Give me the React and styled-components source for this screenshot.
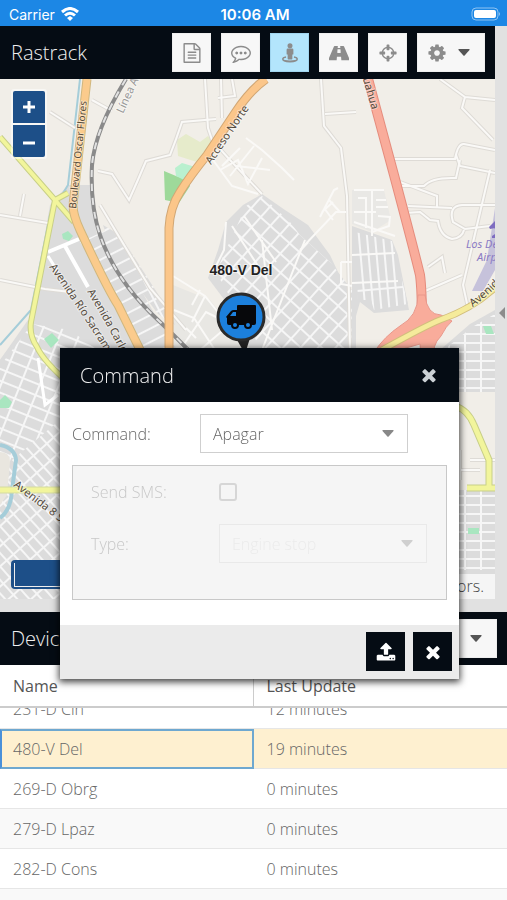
import React, { useLayoutEffect, useRef, useState } from 'react';
import styled, { createGlobalStyle } from 'styled-components';

const GlobalStyle = createGlobalStyle`
    * {
        box-sizing: border-box;
    }

    body {
        margin: 0;
        background: #e1e1e1;
        color: #666;
        font-family: 'Open Sans', 'Noto Sans', sans-serif;
        font-size: 16px;
        font-weight: 300;
    }

    button,
    select,
    input {
        margin: 0;
        font: inherit;
    }
`;

//Layout:

const Screen = styled.div`
    position: relative;
    display: grid;
    grid-template-columns: minmax(0, 1fr);
    grid-template-rows: 26px minmax(0, 2fr) minmax(0, 1fr);
    grid-template-rows: 26px minmax(0, 1fr) 32vh;
    height: 100vh;
    overflow: hidden;
`;

const StatusBar = styled.header`
    display: grid;
    grid-template-columns: 1fr auto 1fr;
    align-items: center;
    padding: 2px 6px 0 9px;
    background: #1c87e5;
    color: #fff;
    font-family: Inter, 'Liberation Sans', sans-serif;
    font-size: 14px;
    font-weight: 400;
`;

const Carrier = styled.span`
    display: flex;
    align-items: center;
    gap: 6px;
`;

const Time = styled.span`
    font-size: 15px;
    font-weight: 600;
`;

const BatteryIcon = styled.svg`
    justify-self: end;
`;

const Upper = styled.div`
    display: flex;
    min-height: 0;
    padding-bottom: 13px;
`;

const MapPanel = styled.section`
    display: flex;
    flex-direction: column;
    flex: 1;
    min-width: 0;
`;

const SideSplitter = styled.button`
    display: flex;
    align-items: center;
    justify-content: flex-end;
    flex: none;
    width: 12px;
    padding: 0 2px 0 0;
    border: 0;
    background: #e1e1e1;
`;

const Header = styled.div`
    display: flex;
    align-items: center;
    gap: 10px;
    flex: none;
    height: 53px;
    padding: 0 10px 0 11px;
    background: #050c14;
`;

const Title = styled.h1`
    flex: 1;
    margin: 0;
    color: #f0f0f0;
    font-size: 20px;
    font-weight: 300;
`;

const ToolButton = styled.button`
    display: flex;
    align-items: center;
    justify-content: center;
    gap: 11px;
    flex: none;
    width: ${(props) => (props.$wide ? 68 : 39)}px;
    height: 39px;
    padding: 0 ${(props) => (props.$wide ? 5 : 0)}px 0 0;
    border: 1px solid ${(props) => (props.$pressed ? '#a0d4ee' : '#eee')};
    background: ${(props) => (props.$pressed ? '#b3e5fc' : '#f7f7f7')};
    color: #8c8c8c;
`;

//Map:

const MapArea = styled.div`
    position: relative;
    flex: 1;
    min-height: 0;
    overflow: hidden;
`;

const MapDrawing = styled.svg`
    display: block;
    width: 100%;
    height: 100%;
`;

const ZoomControl = styled.div`
    position: absolute;
    top: 10px;
    left: 11px;
    display: grid;
    gap: 2px;
    padding: 2px;
    border-radius: 3px;
    background: rgba(255, 255, 255, 0.5);
`;

const ZoomButton = styled.button`
    display: grid;
    place-items: center;
    width: 32px;
    height: 32px;
    padding: 0;
    border: 0;
    border-radius: ${(props) => (props.$bottom ? '0 0 2px 2px' : '2px 2px 0 0')};
    background: #1d4f88;
    color: #fff;
`;

const ScaleLine = styled.div`
    position: absolute;
    left: 11px;
    bottom: 10px;
    width: 120px;
    height: 29px;
    padding: 3px;
    border-radius: 4px;
    background: #1d4f88;

    &::before {
        content: '';
        display: block;
        height: 100%;
        border: 1px solid #eee;
        border-top: 0;
    }
`;

const Attribution = styled.div`
    position: absolute;
    right: 0;
    bottom: 0;
    padding: 0 11px 0 6px;
    background: rgba(255, 255, 255, 0.7);
    line-height: 25px;
    color: #444;
`;

//Devices:

const DevicesPanel = styled.section`
    display: flex;
    flex-direction: column;
    min-height: 0;
`;

const GridScroll = styled.div`
    flex: 1;
    min-height: 0;
    overflow: hidden;
    background: #fff;
`;

const DeviceTable = styled.table`
    width: 100%;
    table-layout: fixed;
    border-collapse: separate;
    border-spacing: 0;
`;

const HeadCell = styled.th`
    position: sticky;
    top: 0;
    height: 43px;
    padding: 0 12px 0 13px;
    border-bottom: 2px solid #ccc;
    background: #fff;
    color: #555;
    font-weight: 400;
    text-align: left;

    &:first-child {
        border-right: 1px solid #ccc;
    }
`;

const Cell = styled.td`
    height: 40px;
    padding: 0 12px 0 13px;
    background: ${(props) => props.$fill};
    border-bottom: 1px solid #e6e6e6;
    ${(props) =>
        props.$focused &&
        'border: 2px solid #6ea8d0; border-left-color: #4a90d9; padding-left: 11px;'}
`;

//Dialog:

const Dialog = styled.div`
    position: absolute;
    top: 348px;
    left: 60px;
    right: 48px;
    background: #fff;
    box-shadow: 0 2px 7px 1px rgba(0, 0, 0, 0.75);
`;

const DialogHeader = styled.div`
    display: flex;
    align-items: center;
    justify-content: space-between;
    height: 54px;
    padding: 0 20px;
    background: #050c14;
`;

const DialogTitle = styled.h2`
    margin: 0;
    color: #f0f0f0;
    font-size: 20px;
    font-weight: 300;
`;

const CloseButton = styled.button`
    display: flex;
    padding: 0;
    border: 0;
    background: none;
    color: #ccd1d5;
`;

const DialogBody = styled.div`
    padding: 12px 12px 25px;
`;

const Field = styled.div`
    display: grid;
    grid-template-columns: 128px 208px;
    align-items: center;
    min-height: 39px;
`;

const Label = styled.label`
    color: ${(props) => (props.$disabled ? '#c8c8c8' : '#666')};
`;

const SelectBox = styled.div`
    position: relative;
    color: #888;
`;

const SelectInput = styled.select`
    appearance: none;
    display: block;
    width: 100%;
    height: 39px;
    padding: 0 36px 0 12px;
    border: 1px solid #cfcfcf;
    border-radius: 0;
    background: #fff;
    color: #666;

    &:disabled {
        border-color: #e9e9e9;
        background: #f6f6f6;
        color: #ebebeb;
        opacity: 1;
    }
`;

const SelectCaret = styled.span`
    position: absolute;
    top: 0;
    bottom: 0;
    right: 14px;
    display: flex;
    align-items: center;
    color: ${(props) => (props.$disabled ? '#cfcfcf' : '#888')};
    pointer-events: none;
`;

const Options = styled.fieldset`
    display: grid;
    gap: 13px;
    min-width: 0;
    margin: 12px 0 0;
    padding: 6px 18px 36px;
    border: 1px solid #c8c8c8;
    background: #f5f5f5;
`;

const Checkbox = styled.input`
    appearance: none;
    width: 18px;
    height: 18px;
    border: 2px solid #d6d6d6;
    border-radius: 3px;
`;

const DialogFooter = styled.div`
    display: flex;
    justify-content: flex-end;
    gap: 8px;
    padding: 7px 7px 8px;
    background: #ebebeb;
`;

const DarkButton = styled.button`
    display: grid;
    place-items: center;
    width: 39px;
    height: 39px;
    padding: 0;
    border: 0;
    background: #050c14;
    color: #fff;
`;

//Icons:

const icons = {
    report:
        'M1596 380q28 28 48 76t20 88v1152q0 40-28 68t-68 28h-1344q-40 0-68-28t-28-68v-1600q0-40 28-68t68-28h896q40 0 88 20t76 48zm-444-244v376h376q-10-29-22-41l-313-313q-12-12-41-22zm384 1528v-1024h-416q-40 0-68-28t-28-68v-416h-768v1536h1280zm-1024-864q0-14 9-23t23-9h704q14 0 23 9t9 23v64q0 14-9 23t-23 9h-704q-14 0-23-9t-9-23v-64zm736 224q14 0 23 9t9 23v64q0 14-9 23t-23 9h-704q-14 0-23-9t-9-23v-64q0-14 9-23t23-9h704zm0 256q14 0 23 9t9 23v64q0 14-9 23t-23 9h-704q-14 0-23-9t-9-23v-64q0-14 9-23t23-9h704z',
    comment:
        'M640 896q0 53-37.5 90.5t-90.5 37.5-90.5-37.5-37.5-90.5 37.5-90.5 90.5-37.5 90.5 37.5 37.5 90.5zm384 0q0 53-37.5 90.5t-90.5 37.5-90.5-37.5-37.5-90.5 37.5-90.5 90.5-37.5 90.5 37.5 37.5 90.5zm384 0q0 53-37.5 90.5t-90.5 37.5-90.5-37.5-37.5-90.5 37.5-90.5 90.5-37.5 90.5 37.5 37.5 90.5zm-512-512q-204 0-381.5 69.5t-282 187.5-104.5 255q0 112 71.5 213.5t201.5 175.5l87 50-27 96q-24 91-70 172 152-63 275-171l43-38 57 6q69 8 130 8 204 0 381.5-69.5t282-187.5 104.5-255-104.5-255-282-187.5-381.5-69.5zm896 512q0 174-120 321.5t-326 233-450 85.500q-70 0-145-8-198 175-460 242-49 14-114 22h-5q-15 0-27-10.5t-16-27.5v-1q-3-4-.5-12t2-10 4.5-9.5l6-9 7-8.5 8-9q7-8 31-34.5t34.5-38 31-39.5 32.5-51 27-59 26-76q-157-89-247.5-220t-90.5-281q0-174 120-321.5t326-233 450-85.5 450 85.5 326 233 120 321.5z',
    person:
        'M896 20a225 225 0 1 1 0 450a225 225 0 1 1 0-450zM700 500h392q108 0 108 108v370q0 60-60 60h-34v370q0 62-62 62h-296q-62 0-62-62v-370h-34q-60 0-60-60v-370q0-108 108-108zM530 1190l18 130q-230 45-230 120q0 130 578 130t578-130q0-75-230-120l18-130q350 75 350 250q0 300-716 300t-716-300q0-175 350-250z',
    road:
        'M500 260h290l-14 190h240l-14-190h290q40 0 58 44l480 1130q50 122-34 122h-690l-24-330h-372l-24 330h-690q-84 0-34-122l480-1130q18-44 58-44zM764 560l-22 300q0 30 30 30h248q30 0 30-30l-22-300z',
    crosshairs:
        'M1325 1024h-109q-26 0-45-19t-19-45v-128q0-26 19-45t45-19h109q-32-108-112.5-188.5t-188.5-112.5v109q0 26-19 45t-45 19h-128q-26 0-45-19t-19-45v-109q-108 32-188.5 112.5t-112.5 188.5h109q26 0 45 19t19 45v128q0 26-19 45t-45 19h-109q32 108 112.5 188.5t188.5 112.5v-109q0-26 19-45t45-19h128q26 0 45 19t19 45v109q108-32 188.5-112.5t112.5-188.5zm339-192v128q0 26-19 45t-45 19h-143q-37 161-154.5 278.5t-278.5 154.5v143q0 26-19 45t-45 19h-128q-26 0-45-19t-19-45v-143q-161-37-278.5-154.5t-154.5-278.5h-143q-26 0-45-19t-19-45v-128q0-26 19-45t45-19h143q37-161 154.5-278.5t278.5-154.5v-143q0-26 19-45t45-19h128q26 0 45 19t19 45v143q161 37 278.5 154.5t154.5 278.5h143q26 0 45 19t19 45z',
    cog:
        'M1152 896q0-106-75-181t-181-75-181 75-75 181 75 181 181 75 181-75 75-181zm512-109v222q0 12-8 23t-20 13l-185 28q-19 54-39 91 35 50 107 138 10 12 10 25t-9 23q-27 37-99 108t-94 71q-12 0-26-9l-138-108q-44 23-91 38-16 136-29 186-7 28-36 28h-222q-14 0-24.5-8.5t-11.5-21.5l-28-184q-49-16-90-37l-141 107q-10 9-25 9-14 0-25-11-126-114-165-168-7-10-7-23 0-12 8-23 15-21 51-66.5t54-70.5q-27-50-41-99l-183-27q-13-2-21-12.5t-8-23.5v-222q0-12 8-23t19-13l186-28q14-46 39-92-40-57-107-138-10-12-10-24 0-10 9-23 26-36 98.5-107.5t94.5-71.5q13 0 26 10l138 107q44-23 91-38 16-136 29-186 7-28 36-28h222q14 0 24.5 8.5t11.5 21.5l28 184q49 16 90 37l142-107q9-9 24-9 13 0 25 10 129 119 165 170 7 8 7 22 0 12-8 23-15 21-51 66.5t-54 70.5q26 50 41 98l183 28q13 2 21 12.5t8 23.5z',
    times:
        'M1490 1322q0 40-28 68l-136 136q-28 28-68 28t-68-28l-294-294-294 294q-28 28-68 28t-68-28l-136-136q-28-28-28-68t28-68l294-294-294-294q-28-28-28-68t28-68l136-136q28-28 68-28t68 28l294 294 294-294q28-28 68-28t68 28l136 136q28 28 28 68t-28 68l-294 294 294 294q28 28 28 68z',
    upload:
        'M1344 1472q0-26-19-45t-45-19-45 19-19 45 19 45 45 19 45-19 19-45zm256 0q0-26-19-45t-45-19-45 19-19 45 19 45 45 19 45-19 19-45zm128-224v320q0 40-28 68t-68 28h-1472q-40 0-68-28t-28-68v-320q0-40 28-68t68-28h427q21 56 70.5 92t110.5 36h256q61 0 110.5-36t70.5-92h427q40 0 68 28t28 68zm-325-648q-17 40-59 40h-256v448q0 26-19 45t-45 19h-256q-26 0-45-19t-19-45v-448h-256q-42 0-59-40-17-39 14-69l448-448q18-19 45-19t45 19l448 448q31 30 14 69z',
};

const Icon = ({ name, size = 20 }) => (
    <svg width={size} height={size} viewBox="0 0 1792 1792" fill="currentColor" aria-hidden="true">
        <path fillRule="evenodd" d={icons[name]} />
    </svg>
);

const Caret = ({ color = 'currentColor' }) => (
    <svg width="12" height="7" viewBox="0 0 12 7" aria-hidden="true">
        <path d="M1 0h10q1 0 .5 1L6.600 6.500q-.6.500-1.200 0L.5 1Q0 0 1 0z" fill={color} />
    </svg>
);

//Street map, everything is drawn in screen units:

const roads = {
    acceso: 'M266 79Q250 90 235 113L207 155Q190 176 180 192Q170 207 169 228V375',
    boulevard: 'M87 79L73 205Q73 215 80 230Q108 290 118 305L150 370',
    rail: 'M126 79Q95 130 92 165Q90 205 100 235Q115 280 158 320Q175 336 200 362',
    west: 'M0 137L55 200L74 222M68 193L55 200L31 322Q29 335 37 347Q44 362 70 384',
    highway: 'M367 75L394 175Q414 250 420 275Q422 290 422 325L430 375',
    avenida: 'M382 350Q425 326 440 320Q475 308 500 283',
};

const lanes = [
    'M205 79L208 128L212 140L230 160L262 194M221 79L222 118M232 79L235 96L218 98',
    'M216 119L182 122Q176 140 170 155L146 161Q138 180 129 200L112 174L98 171',
    'M321 79L324 126L341 148L347 196L350 350M325 114L356 112',
    'M440 79L465 97L495 100M465 97L462 108L493 140',
    'M393 159H455Q458 143 464 144L495 150M456 155L460 166L495 173',
    'M402 186L424 186Q432 177 456 178L460 160',
    'M400 182L437 196V207M408 206L452 208M495 205H462Q448 206 453 222L465 229L490 226',
    'M405 213L420 212L430 220L438 221Q440 236 452 239Q462 238 464 230',
    'M425 291L462 275M428 267L442 257L445 273',
    'M490 170L463 285L468 308',
    'M0 215L48 223M20 216L24 194M0 280L45 289L70 292M50 112L75 128',
    'M92 100L112 111M100 205L115 230L150 288L186 330',
    'M456 470H480M460 450V480M470 460H495',
];

const townStreets = [
    'M246 138L262 150L282 168L294 180M213 160L232 186L258 194M222 166L240 148M230 176L254 146M220 170L238 160L248 184L262 158M236 166L270 170',
    'M346 212L336 212L300 250M320 217L334 190L338 188M324 208L333 220M329 200L340 212M322 212L333 202',
    'M262 350L305 240M226 222L224 250L214 270M232 226L262 272M244 216L276 262M262 240L272 330',
    'M173 276L205 296L232 330M192 305L200 290M174 310L194 318L215 350M180 350L206 312L218 318M186 328L196 338M200 350L228 326M205 296L192 322',
    'M354 190H384M372 190V236M354 212H376M358 198H366V228M376 200H386M376 207H388M378 216L390 217L389 226L372 232M354 222L395 236',
    'M341 262H352M341 262V284L352 286M352 255L395 253M352 283L398 281',
];

const Road = ({ d, width, fill, edge }) => (
    <g fill="none">
        <path d={d} stroke={edge} strokeWidth={width + 2} />
        <path d={d} stroke={fill} strokeWidth={width} />
    </g>
);

const Streets = ({ id, w, h, angle, line = 2 }) => (
    <pattern id={id} width={w} height={h} patternUnits="userSpaceOnUse" patternTransform={`rotate(${angle})`}>
        <rect width={w} height={h} fill="#dcdcdc" />
        <path d={`M0 ${line / 2}H${w}M${line / 2} 0V${h}`} stroke="#f6f6f6" strokeWidth={line} />
    </pattern>
);

const StreetMap = () => (
    <MapDrawing viewBox="0 79 495 520" preserveAspectRatio="xMidYMid slice" role="img" aria-label="Map">
        <defs>
            <Streets id="blocksA" w={15} h={9} angle={48} />
            <Streets id="blocksB" w={13} h={14} angle={42} />
            <Streets id="blocksC" w={8} h={80} angle={-5} />
            <Streets id="blocksD" w={16} h={9} angle={0} />
            <Streets id="blocksE" w={18} h={11} angle={22} />
            <Streets id="blocksF" w={40} h={12} angle={-27} />
        </defs>
        <rect y="79" width="495" height="520" fill="#f1eee8" />

        <g fill="#dcdcdc">
            <path d="M50 205L68 185H90L97 235L160 322L200 370H60L0 360L30 320z" />
            <path d="M0 360L28 320L80 335V600H0z" />
            <path d="M226 222L243 205L262 194L285 210L308 225L330 255L345 287L356 292V350H250L232 310L208 278L218 250z" />
            <path d="M352 226L392 240L398 255L409 310L374 313L360 302L352 330z" />
            <path d="M440 350L470 324L495 310V392L455 385z" />
            <path d="M455 490H495V600H455z" />
        </g>
        <path d="M173 285L210 300L250 350H173z" fill="#e8e7e3" />
        <path d="M80 242L107 230L158 320L190 370H150L118 300L96 265z" fill="url(#blocksF)" />
        <path d="M103 225L120 235L165 305L175 325L158 314L112 252z" fill="url(#blocksF)" />
        <path d="M0 366L32 324L70 330L125 370V600H0z" fill="url(#blocksE)" />
        <path d="M0 470L60 420V600H0z" fill="url(#blocksA)" />
        <path d="M246 206L262 196L290 222L300 235L330 262L352 290V350H262L226 290L216 272z" fill="url(#blocksB)" />
        <path d="M355 232L392 241L408 304L374 310L371 300H358z" fill="url(#blocksC)" />
        <path d="M352 190H384L391 220L372 232L352 224z" fill="#e9e8e5" />
        <path d="M446 348L474 326L495 314V392H455z" fill="url(#blocksD)" />
        <path d="M455 490H495V570H455z" fill="url(#blocksD)" />

        {/* water and parks */}
        <g fill="none" stroke="#a5cdd9" strokeWidth="2">
            <path d="M80 79L68 185L50 215L31 310L0 345" />
            <path d="M0 445Q15 448 16 460L12 490Q11 510 0 518" strokeWidth="4" />
        </g>
        <path d="M0 452Q10 452 10 462L7 495L0 505z" fill="#e9e6df" />
        <path d="M177 140L186 134L200 142L208 136L212 140L200 163L178 156z" fill="#e6ebcb" />
        <path d="M164 171L176 176L188 180L190 186L179 203L165 200z" fill="#9ed99a" />
        <path d="M175 168L182 163L192 166L196 170L188 182L176 176z" fill="#b9f0cf" />
        <g fill="#a9e6c0">
            <path d="M62 234l6-3 5 5-4 5-6-2zM44 339l8-6 7 7-8 8z" />
            <path d="M0 400l5-5 7 7-3 6H0zM468 528h11v6h-11z" />
        </g>
        <path d="M495 208L490 240L487 260L472 291L483 291L495 270z" fill="#c6c2db" />
        <path d="M483 326h8l3 8h-8z" fill="#a9e6c0" />

        {/* minor roads */}
        <g fill="none" stroke="#dedbd6" strokeWidth="4">
            {lanes.map((d) => (
                <path key={d} d={d} />
            ))}
        </g>
        <g fill="none" stroke="#faf9f7" strokeWidth="2">
            {lanes.map((d) => (
                <path key={d} d={d} />
            ))}
            {townStreets.map((d) => (
                <path key={d} d={d} />
            ))}
            <path d="M48 252L79 239M65 246L88 287" stroke="#fff" strokeWidth="4" />
            <path d="M48 256L58 272M38 358L45 405L58 395" stroke="#fff" strokeWidth="3" />
        </g>

        <Road d={roads.west} width={4} fill="#f2f59c" edge="#c8cf88" />
        <Road d="M0 490H70" width={5} fill="#f2f59c" edge="#d5dba0" />
        <Road d="M455 406Q468 410 474 425L489 460V488M467 488H495" width={5} fill="#f2f59c" edge="#c8cf88" />
        <path d={roads.rail} fill="none" stroke="#8a8a8a" strokeWidth="4" />
        <path d={roads.rail} fill="none" stroke="#e2e2e2" strokeWidth="2" strokeDasharray="7 7" />
        <Road d={roads.boulevard} width={7} fill="#fbcb8c" edge="#d0b77e" />
        <Road d={roads.acceso} width={7} fill="#fbc68a" edge="#d1a775" />
        <Road d={roads.highway} width={8} fill="#f9ac9b" edge="#e58c7d" />
        <path d="M418 295Q418 316 400 326Q385 336 374 352H392L420 344Q421 350 420 358H435Q431 346 441 336Q446 326 452 321L441 315Q427 315 425 295z" fill="#f9ac9b" stroke="#e9988b" />
        <Road d={roads.avenida} width={5} fill="#f5eb9b" edge="#d2be7d" />

        {/* street names */}
        <defs>
            <path id="nBoulevard" d="M76 209L88 90" />
            <path id="nAcceso" d="M211 165L263 88" />
            <path id="nLinea" d="M123 114L147 62" />
            <path id="nRio" d="M49 267Q80 310 117 370" />
            <path id="nCarlos" d="M87 292Q105 320 130 370" />
            <path id="nSur" d="M13 486L76 534" />
            <path id="nChih" d="M356 56L378 130" />
            <path id="nEast" d="M473 307Q490 295 515 268" />
        </defs>
        <g
            fill="#554b3d"
            fontFamily="'Noto Sans', 'Open Sans', sans-serif"
            fontSize="11"
            fontWeight="400"
            stroke="#fff"
            strokeOpacity="0.4"
            strokeWidth="2"
            paintOrder="stroke"
        >
            <text fontSize="10"><textPath href="#nBoulevard">Boulevard Oscar Flores</textPath></text>
            <text><textPath href="#nAcceso">Acceso Norte</textPath></text>
            <text fill="#999"><textPath href="#nLinea">Línea A</textPath></text>
            <text><textPath href="#nRio">Avenida Río Sacramento</textPath></text>
            <text><textPath href="#nCarlos">Avenida Carlos</textPath></text>
            <text><textPath href="#nSur">Avenida 8 Sur</textPath></text>
            <text><textPath href="#nChih">Chihuahua</textPath></text>
            <text><textPath href="#nEast">Avenida</textPath></text>
        </g>
        <g fill="#8b7bc4" fontFamily="'Noto Sans', sans-serif" fontSize="11" fontStyle="italic" fontWeight="400">
            <text x="466" y="248">Los De</text>
            <text x="477" y="261">Airp</text>
        </g>
        <path d="M495 221l-6 6 1 2 5-1v6l-3 2v2h3z" fill="#7d6cc0" />

        {/* device marker */}
        <text
            x="241"
            y="275"
            fill="#222"
            stroke="#fff"
            strokeOpacity="0.5"
            strokeWidth="2"
            paintOrder="stroke"
            textAnchor="middle"
            fontFamily="'Liberation Sans', sans-serif"
            fontWeight="700"
            fontSize="14"
        >
            480-V Del
        </text>
        <path d="M236 338L245 354L250 338z" fill="#222" />
        <circle cx="241" cy="317" r="23" fill="#1c80dd" stroke="#2b2b2b" strokeWidth="3" />
        <path d="M238 305h17q1 0 1 1v17q0 2-2 2h-2a4 4 0 0 1-8 0h-5a4 4 0 0 1-8 0h-2q-2 0-2-2v-5l-1-1 5-6q1-1 3-1h3v-4q0-1 1-1zM230 316h6v-4h-3z" fill="#07080b" fillRule="evenodd" />
        <circle cx="235" cy="325" r="2" fill="#1c80dd" />
        <circle cx="248" cy="325" r="2" fill="#1c80dd" />
    </MapDrawing>
);

//Data:

const devices = [
    { id: 1, name: '231-D Cin', update: '12 minutes' },
    { id: 2, name: '480-V Del', update: '19 minutes' },
    { id: 3, name: '269-D Obrg', update: '0 minutes' },
    { id: 4, name: '279-D Lpaz', update: '0 minutes' },
    { id: 5, name: '282-D Cons', update: '0 minutes' },
    { id: 6, name: '', update: '' },
];

//Render:

const DeviceGrid = () => {
    const scroller = useRef(null);
    const [selected, setSelected] = useState(2);

    useLayoutEffect(() => {
        scroller.current.scrollTop = 19;
    }, []);

    const rowFill = (device, index) => {
        if (device.id === selected) return '#fef0d0';
        return index % 2 ? '#f9f9f9' : '#fff';
    };

    return (
        <GridScroll ref={scroller}>
            <DeviceTable>
                <thead>
                    <tr>
                        <HeadCell>Name</HeadCell>
                        <HeadCell>Last Update</HeadCell>
                    </tr>
                </thead>
                <tbody>
                    {devices.map((device, index) => (
                        <tr key={device.id} onClick={() => setSelected(device.id)}>
                            <Cell $fill={rowFill(device, index)} $focused={device.id === selected}>
                                {device.name}
                            </Cell>
                            <Cell $fill={rowFill(device, index)}>{device.update}</Cell>
                        </tr>
                    ))}
                </tbody>
            </DeviceTable>
        </GridScroll>
    );
};

const CommandDialog = ({ onClose }) => (
    <Dialog role="dialog" aria-labelledby="command-title">
        <DialogHeader>
            <DialogTitle id="command-title">Command</DialogTitle>
            <CloseButton aria-label="Close" onClick={onClose}>
                <Icon name="times" />
            </CloseButton>
        </DialogHeader>
        <DialogBody>
            <Field>
                <Label htmlFor="command">Command:</Label>
                <SelectBox>
                    <SelectInput id="command">
                        <option>Apagar</option>
                    </SelectInput>
                    <SelectCaret>
                        <Caret />
                    </SelectCaret>
                </SelectBox>
            </Field>
            <Options disabled>
                <Field>
                    <Label $disabled htmlFor="sms">Send SMS:</Label>
                    <Checkbox id="sms" type="checkbox" />
                </Field>
                <Field>
                    <Label $disabled htmlFor="type">Type:</Label>
                    <SelectBox>
                        <SelectInput id="type">
                            <option>Engine stop</option>
                        </SelectInput>
                        <SelectCaret $disabled>
                            <Caret />
                        </SelectCaret>
                    </SelectBox>
                </Field>
            </Options>
        </DialogBody>
        <DialogFooter>
            <DarkButton aria-label="Send">
                <Icon name="upload" />
            </DarkButton>
            <DarkButton aria-label="Cancel" onClick={onClose}>
                <Icon name="times" />
            </DarkButton>
        </DialogFooter>
    </Dialog>
);

const App = () => {
    //These states control dialog and follow mode:
    const [dialogOpen, setDialogOpen] = useState(true);
    const [follow, setFollow] = useState(true);

    return (
        <>
            <GlobalStyle />
            <Screen>
                <StatusBar>
                    <Carrier>
                        Carrier
                        <svg width="18" height="14" viewBox="0 0 18 14" fill="none" stroke="#fff" strokeWidth="3" aria-hidden="true">
                            <path d="M1 5Q9-2 17 5M4 8.500Q9 4 14 8.500" />
                            <path d="M9 9l3 2-3 3-3-3z" fill="#fff" stroke="none" />
                        </svg>
                    </Carrier>
                    <Time>10:06 AM</Time>
                    <BatteryIcon width="30" height="14" viewBox="0 0 30 14" aria-hidden="true">
                        <rect x="1" y="1" width="26" height="12" rx="4" fill="none" stroke="#8ec3f2" />
                        <rect x="3" y="3" width="22" height="8" rx="2" fill="#fff" />
                        <path d="M28 5q2 2 0 4z" fill="#8ec3f2" />
                    </BatteryIcon>
                </StatusBar>
                <Upper>
                    <MapPanel>
                        <Header>
                            <Title>Rastrack</Title>
                            <ToolButton aria-label="Reports">
                                <Icon name="report" />
                            </ToolButton>
                            <ToolButton aria-label="Events">
                                <Icon name="comment" />
                            </ToolButton>
                            <ToolButton aria-label="Follow" $pressed={follow} onClick={() => setFollow(!follow)}>
                                <Icon name="person" />
                            </ToolButton>
                            <ToolButton aria-label="Routes">
                                <Icon name="road" />
                            </ToolButton>
                            <ToolButton aria-label="Locate">
                                <Icon name="crosshairs" />
                            </ToolButton>
                            <ToolButton aria-label="Settings" $wide>
                                <Icon name="cog" />
                                <Caret color="#555" />
                            </ToolButton>
                        </Header>
                        <MapArea>
                            <StreetMap />
                            <ZoomControl>
                                <ZoomButton aria-label="Zoom in">
                                    <svg width="14" height="14" viewBox="0 0 14 14" stroke="currentColor" strokeWidth="3">
                                        <path d="M7 1v12M1 7h12" />
                                    </svg>
                                </ZoomButton>
                                <ZoomButton aria-label="Zoom out" $bottom>
                                    <svg width="14" height="14" viewBox="0 0 14 14" stroke="currentColor" strokeWidth="3">
                                        <path d="M1 9h12" />
                                    </svg>
                                </ZoomButton>
                            </ZoomControl>
                            <ScaleLine />
                            <Attribution>© OpenStreetMap contributors.</Attribution>
                        </MapArea>
                    </MapPanel>
                    <SideSplitter aria-label="Expand panel">
                        <svg width="6" height="12" viewBox="0 0 6 12" aria-hidden="true">
                            <path d="M6 0v12L0 6z" fill="#8c8c8c" />
                        </svg>
                    </SideSplitter>
                </Upper>
                <DevicesPanel>
                    <Header>
                        <Title as="h2">Devices</Title>
                        <ToolButton aria-label="Device settings" $wide>
                            <Icon name="cog" />
                            <Caret color="#555" />
                        </ToolButton>
                    </Header>
                    <DeviceGrid />
                </DevicesPanel>
                {dialogOpen && <CommandDialog onClose={() => setDialogOpen(false)} />}
            </Screen>
        </>
    );
};

export default App;
